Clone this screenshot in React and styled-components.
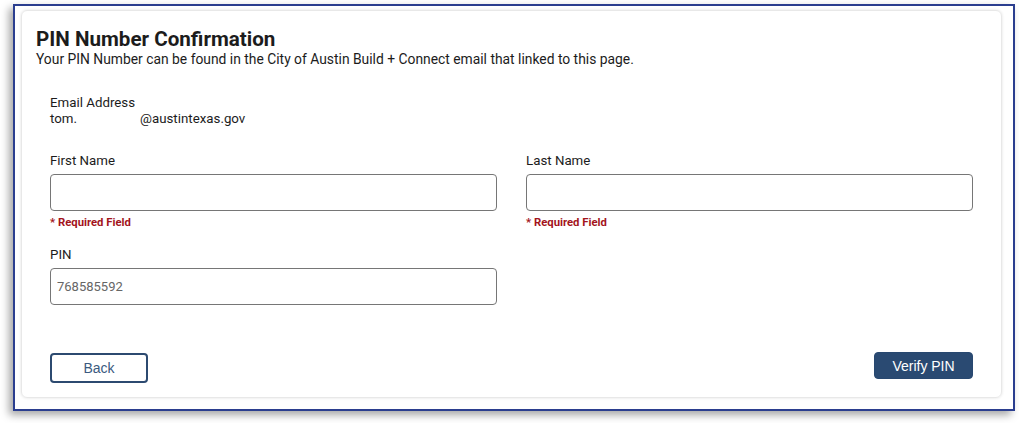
import React from "react";
import styled, { createGlobalStyle } from "styled-components";

const GlobalStyle = createGlobalStyle`
  * {
    box-sizing: border-box;
  }
  body {
    margin: 0;
    background: #ffffff;
    font-family: Roboto, "Liberation Sans", Arial, sans-serif;
    color: #212121;
  }
`;

const Page = styled.div`
  padding: 4px 0 12px 13px;
`;

const Frame = styled.div`
  width: 1002px;
  height: 407px;
  border: 2px solid #2b3e8f;
  padding: 4px 11px 11px 6px;
  background: #ffffff;
  box-shadow: -4px 4px 8px rgba(0, 0, 0, 0.35);
`;

const Card = styled.div`
  height: 100%;
  border: 1px solid #e8e8e8;
  border-radius: 6px;
  box-shadow: 0 0 3px rgba(0, 0, 0, 0.12);
  padding: 16px 14px 0 14px;
`;

const Title = styled.h1`
  margin: 0;
  font-size: 20.6px;
  line-height: 24px;
  font-weight: 700;
  color: #1c1c1c;
`;

const Subtitle = styled.p`
  margin: 0;
  font-size: 13.85px;
  line-height: 16px;
  color: #1c1c1c;
`;

const Body = styled.div`
  padding: 0 14px;
`;

const EmailBlock = styled.div`
  margin-top: 28px;
  font-size: 13.3px;
  line-height: 16px;
  color: #1c1c1c;
`;

const EmailUser = styled.span`
  display: inline-block;
  width: 90px;
`;

const Grid = styled.div`
  display: grid;
  grid-template-columns: 447px 447px;
  column-gap: 29px;
  row-gap: 18px;
  margin-top: 26px;
`;

const Field = styled.div`
  display: flex;
  flex-direction: column;
`;

const Label = styled.label`
  font-size: 13.3px;
  line-height: 16px;
  color: #1c1c1c;
  margin-bottom: 5px;
`;

const Input = styled.input`
  width: 100%;
  height: 37px;
  border: 1px solid #767676;
  border-radius: 4px;
  padding: 0 6px;
  font-family: Roboto, "Liberation Sans", Arial, sans-serif;
  font-size: 13px;
  color: #666666;
  background: #ffffff;
  outline: none;
`;

const Required = styled.span`
  margin-top: 5px;
  font-size: 11.3px;
  line-height: 13px;
  font-weight: 700;
  color: #a3141c;
`;

const Actions = styled.div`
  display: flex;
  justify-content: space-between;
  align-items: flex-start;
  margin-top: 47px;
`;

const Button = styled.button`
  font-family: "Liberation Sans", Arial, sans-serif;
  font-size: 14px;
  border-radius: 4px;
  cursor: pointer;
  width: ${(p) => (p.$primary ? "99px" : "98px")};
  height: ${(p) => (p.$primary ? "27px" : "30px")};
  margin-top: ${(p) => (p.$primary ? "0" : "1px")};
  border: ${(p) => (p.$primary ? "1px solid #284870" : "2px solid #2c4a70")};
  background: ${(p) => (p.$primary ? "#2a4a72" : "#ffffff")};
  color: ${(p) => (p.$primary ? "#ffffff" : "#3b5a80")};
`;

export default function App() {
  return (
    <>
      <GlobalStyle />
      <Page>
        <Frame>
          <Card>
            <Title>PIN Number Confirmation</Title>
            <Subtitle>
              Your PIN Number can be found in the City of Austin Build + Connect
              email that linked to this page.
            </Subtitle>
            <Body>
              <EmailBlock>
                <div>Email Address</div>
                <div>
                  <EmailUser>tom.</EmailUser>@austintexas.gov
                </div>
              </EmailBlock>
              <Grid>
                <Field>
                  <Label>First Name</Label>
                  <Input type="text" />
                  <Required>* Required Field</Required>
                </Field>
                <Field>
                  <Label>Last Name</Label>
                  <Input type="text" />
                  <Required>* Required Field</Required>
                </Field>
                <Field>
                  <Label>PIN</Label>
                  <Input type="text" defaultValue="768585592" />
                </Field>
              </Grid>
              <Actions>
                <Button>Back</Button>
                <Button $primary>Verify PIN</Button>
              </Actions>
            </Body>
          </Card>
        </Frame>
      </Page>
    </>
  );
}
